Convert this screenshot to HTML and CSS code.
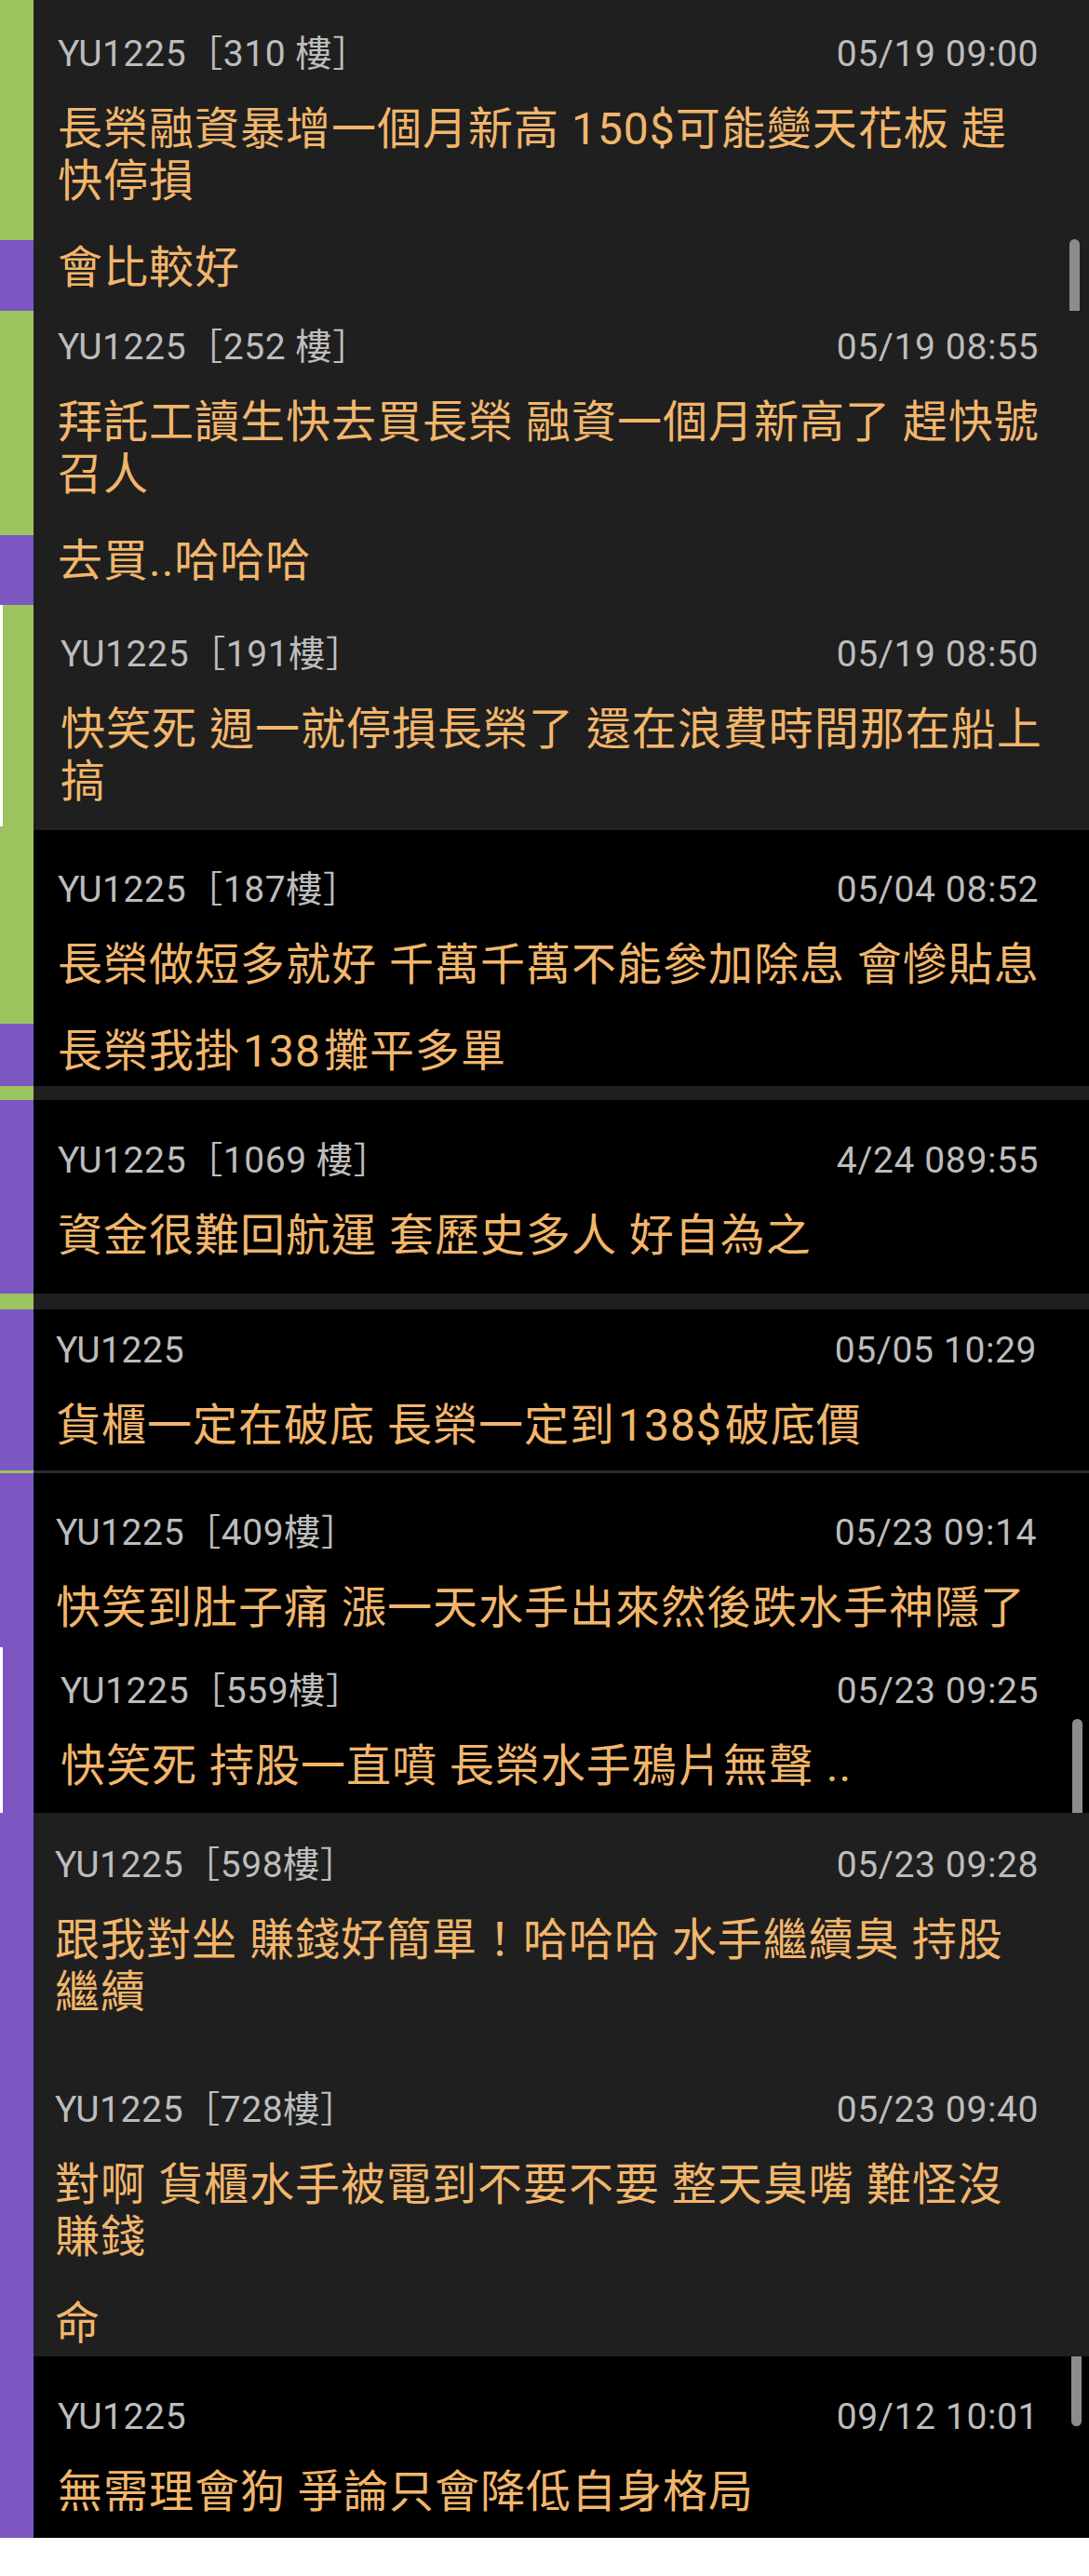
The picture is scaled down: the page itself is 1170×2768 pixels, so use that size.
FILE: index.html
```html
<!DOCTYPE html>
<html lang="zh-Hant">
<head>
<meta charset="utf-8">
<title>YU1225 留言</title>
<link rel="stylesheet" href="styles.css">
</head>
<body>
<div class="page">
  <div class="rail">
    <div class="seg green r1"></div>
    <div class="seg purple r2"></div>
    <div class="seg green r3"></div>
    <div class="seg purple r4"></div>
    <div class="seg green edge r5"></div>
    <div class="seg green r6"></div>
    <div class="seg purple r7"></div>
    <div class="seg green r8"></div>
    <div class="seg purple r9"></div>
    <div class="seg green r10"></div>
    <div class="seg purple r11"></div>
    <div class="seg green r12"></div>
    <div class="seg purple r13"></div>
    <div class="seg purple edge r14"></div>
    <div class="seg purple r15"></div>
  </div>

  <div class="feed">
    <section class="piece grey p1">
      <div class="comment">
        <div class="head"><span>YU1225［310 樓］</span><span>05/19 09:00</span></div>
        <div class="body">
          <p class="para">長榮融資暴增一個月新高 150$可能變天花板 趕<br>快停損</p>
          <p class="para">會比較好</p>
        </div>
      </div>
      <div class="scroll s1"></div>
    </section>

    <section class="piece grey p2">
      <div class="comment">
        <div class="head"><span>YU1225［252 樓］</span><span>05/19 08:55</span></div>
        <div class="body">
          <p class="para">拜託工讀生快去買長榮 融資一個月新高了 趕快號<br>召人</p>
          <p class="para">去買..哈哈哈</p>
        </div>
      </div>
    </section>

    <section class="piece grey p3 shifted">
      <div class="comment">
        <div class="head"><span>YU1225［191樓］</span><span>05/19 08:50</span></div>
        <div class="body">
          <p class="para">快笑死 週一就停損長榮了 還在浪費時間那在船上<br>搞</p>
        </div>
      </div>
    </section>

    <section class="piece black p4">
      <div class="comment">
        <div class="head"><span>YU1225［187樓］</span><span>05/04 08:52</span></div>
        <div class="body">
          <p class="para">長榮做短多就好 千萬千萬不能參加除息 會慘貼息</p>
          <p class="para">長榮我掛<span class="num">138</span>攤平多單</p>
        </div>
      </div>
    </section>

    <div class="band grey b15"></div>

    <section class="piece black p5">
      <div class="comment">
        <div class="head"><span>YU1225［1069 樓］</span><span>4/24 089:55</span></div>
        <div class="body">
          <p class="para">資金很難回航運 套歷史多人 好自為之</p>
        </div>
      </div>
    </section>

    <div class="band grey b17"></div>

    <section class="piece black p6 tight">
      <div class="comment">
        <div class="head"><span>YU1225</span><span>05/05 10:29</span></div>
        <div class="body">
          <p class="para">貨櫃一定在破底 長榮一定到<span class="num">138$</span>破底價</p>
        </div>
      </div>
    </section>

    <div class="band line b3"></div>

    <section class="piece black p7 tight">
      <div class="comment">
        <div class="head"><span>YU1225［409樓］</span><span>05/23 09:14</span></div>
        <div class="body">
          <p class="para">快笑到肚子痛 漲一天水手出來然後跌水手神隱了</p>
        </div>
      </div>
    </section>

    <section class="piece black p8 shifted">
      <div class="comment">
        <div class="head"><span>YU1225［559樓］</span><span>05/23 09:25</span></div>
        <div class="body">
          <p class="para">快笑死 持股一直噴 長榮水手鴉片無聲 ..</p>
        </div>
      </div>
      <div class="scroll s8"></div>
    </section>

    <section class="piece grey p9 tighter">
      <div class="comment">
        <div class="head"><span>YU1225［598樓］</span><span>05/23 09:28</span></div>
        <div class="body">
          <p class="para">跟我對坐 賺錢好簡單！哈哈哈 水手繼續臭 持股<br>繼續</p>
        </div>
      </div>
      <div class="comment next">
        <div class="head"><span>YU1225［728樓］</span><span>05/23 09:40</span></div>
        <div class="body">
          <p class="para">對啊 貨櫃水手被電到不要不要 整天臭嘴 難怪沒<br>賺錢</p>
          <p class="para">命</p>
        </div>
      </div>
    </section>

    <section class="piece black p10">
      <div class="comment">
        <div class="head"><span>YU1225</span><span>09/12 10:01</span></div>
        <div class="body">
          <p class="para">無需理會狗 爭論只會降低自身格局</p>
        </div>
      </div>
      <div class="scroll s10"></div>
    </section>
  </div>
</div>
</body>
</html>
```

FILE: styles.css
```css
html, body {
  margin: 0;
  padding: 0;
  background: #ffffff;
}

.page {
  width: 1170px;
  display: grid;
  grid-template-columns: 36px 1134px;
  font-family: Roboto, "Noto Sans CJK TC", sans-serif;
}

/* left colour rail */
.rail {
  display: flex;
  flex-direction: column;
}
.seg { box-sizing: border-box; }
.green { background: #9bc45e; }
.purple { background: #7d57c1; }
.edge { border-left: 3px solid #ffffff; }
.r1 { height: 258px; }
.r2 { height: 76px; }
.r3 { height: 241px; }
.r4 { height: 75px; }
.r5 { height: 238px; }
.r6 { height: 212px; }
.r7 { height: 67px; }
.r8 { height: 15px; }
.r9 { height: 208px; }
.r10 { height: 17px; }
.r11 { height: 173px; }
.r12 { height: 3px; }
.r13 { height: 187px; }
.r14 { height: 178px; }
.r15 { height: 779px; }

/* feed pieces */
.feed {
  display: flex;
  flex-direction: column;
}
.piece {
  position: relative;
  box-sizing: border-box;
  padding: 0 54px 0 26px;
  overflow: hidden;
}
.grey { background: #1f1f1f; }
.black { background: #000000; }
.line { background: #2a2a2a; }
.shifted { padding-left: 29px; }
.tight { padding-left: 24px; padding-right: 56px; }
.tighter { padding-left: 23px; }

.p1 { height: 334px; padding-top: 35px; }
.p2 { height: 316px; padding-top: 16px; }
.p3 { height: 242px; padding-top: 30px; }
.p4 { height: 275px; padding-top: 41px; }
.p5 { height: 208px; padding-top: 42px; }
.p6 { height: 173px; padding-top: 21px; }
.p7 { height: 187px; padding-top: 41px; }
.p8 { height: 178px; padding-top: 24px; }
.p9 { height: 584px; padding-top: 33px; }
.p10 { height: 195px; padding-top: 42px; }

.b15 { height: 15px; }
.b17 { height: 17px; }
.b3 { height: 3px; }

.comment.next { margin-top: 75px; }

.head {
  display: flex;
  justify-content: space-between;
  font-size: 39px;
  line-height: 46px;
  letter-spacing: 0.6px;
  color: #bdbdbd;
  white-space: nowrap;
}

.body {
  margin-top: 30px;
  color: #f1b66c;
  font-size: 48px;
  line-height: 56px;
  letter-spacing: 1px;
  white-space: nowrap;
}
.num { margin: 0 3px; }
.para { margin: 0; }
.para + .para { margin-top: 37px; }

/* scroll indicators lying over the content */
.scroll {
  position: absolute;
  width: 11px;
  background: #8c8c8c;
  border-radius: 6px;
}
.s1 { right: 10px; top: 257px; height: 90px; }
.s8 { right: 7px; top: 77px; height: 120px; }
.s10 { right: 8px; top: -20px; height: 95px; }
```
